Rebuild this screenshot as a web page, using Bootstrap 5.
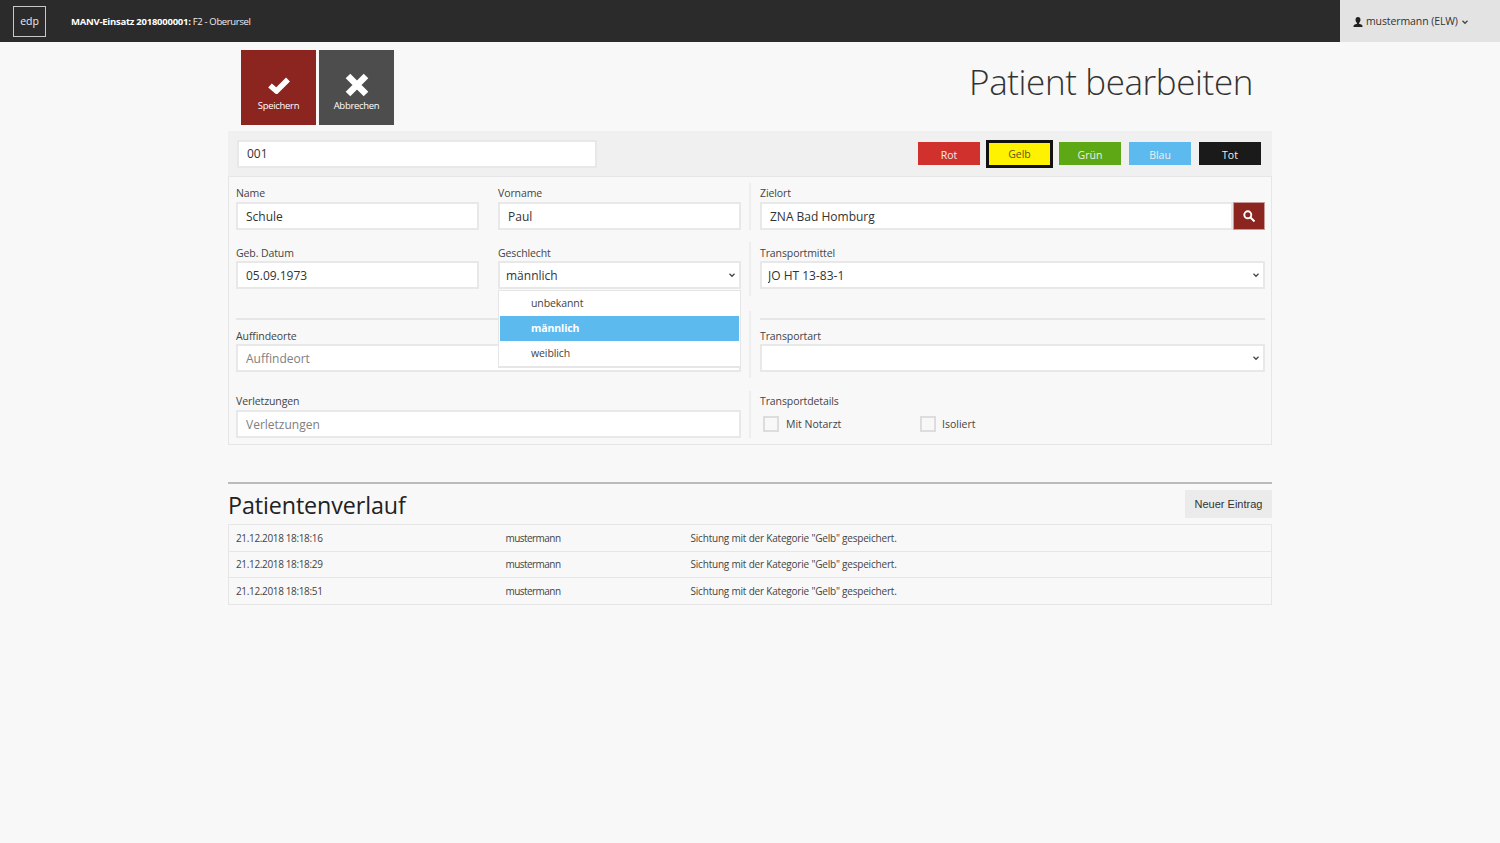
<!DOCTYPE html>
<html lang="de">
<head>
<meta charset="utf-8">
<title>Patient bearbeiten</title>
<link rel="stylesheet" href="https://cdn.jsdelivr.net/npm/bootstrap@5.3.0/dist/css/bootstrap.min.css">
<style>
html,body{height:100%}
body{background:#f8f8f8;font-family:"Open Sans","Noto Sans",sans-serif;color:#333;font-size:11px;--bs-body-bg:#f8f8f8}
.topbar{height:42px;background:#2b2b2b;color:#fff}
.brandbox{width:33px;height:31px;border:1px solid #c8c8c8;margin-left:13px;padding-top:1px;font-size:10.500px;color:#eee}
.topline{margin-left:25px;padding-top:2px;font-size:9.500px;letter-spacing:-.35px;color:#eee}
.topline strong{color:#fff;font-weight:700;letter-spacing:-.25px}
.usermenu{width:160px;background:#e3e3e3;color:#333;font-size:10.500px;padding:1px 0 0 13px;gap:3px;letter-spacing:-.1px}
.page-wrap{width:1044px;position:relative}
.toolbar{height:89px;padding:8px 19px 0 13px;gap:3px}
.actionbtn{width:75px;height:75px;color:#fff;border:0;border-radius:0;font-size:9.500px;letter-spacing:-.3px;padding:27px 0 0;line-height:10px;display:flex;flex-direction:column;align-items:center;justify-content:flex-start}
.actionbtn svg{display:block;margin-bottom:7px;flex:none}
.actionbtn svg.crossicon{margin-top:-4px;margin-bottom:4px}
.btn-save,.btn-save:hover{background:#8c241f;color:#fff}
.btn-cancel,.btn-cancel:hover{background:#4d4d4d;color:#fff}
.pagetitle{font-size:35px;font-weight:300;line-height:1;color:#333;margin:14px 0 0;letter-spacing:-.4px}
.idbar{height:46px;background:#f0f0f0;padding:0 11px 0 9px;border-bottom:1px solid #e6e6e6}
.field{border:2px solid #e8e8e8;border-radius:0;height:28px;padding:0 8px;font-size:12px;color:#333;background-color:#fff;box-shadow:none}
.field::placeholder{color:#808080}
.idfield{width:360px;padding-left:8px}
.tagbtn{width:62px;height:23px;border:0;border-radius:0;color:#eee;font-size:10.500px;padding:3px 0 0;margin-left:8px;line-height:1}
.tag-rot{background:#d0312d}
.tag-gelb{background:#fff200;color:#5a5a12;border:3px solid #111;width:67px;height:28px;margin-left:6px;padding-top:2px}
.tag-gruen{background:#5ea815;margin-left:6px}
.tag-blau{background:#5cbaef}
.tag-tot{background:#1a1a1a}
.formbox{border:1px solid #e6e6e6;border-top:0;padding:6px 0 6px}
.frow{display:flex}
.frow-1{margin-bottom:12px}
.frow-2{margin-bottom:15px}
.frow-3{margin-bottom:13px}
.cell-l{width:522px;border-right:2px solid #eee;padding:4px 8px 0 7px;display:flex;gap:19px;flex:none;position:relative}
.cell-r{flex:1;padding:4px 6px 0 9px}
.fgroup{flex:1;min-width:0}
.flabel{display:block;height:15px;line-height:13px;font-size:10.500px;color:#444;margin:0;letter-spacing:-.1px}
.frow-2 .flabel,.frow-3 .flabel{line-height:15px}
.pb7{padding-bottom:7px}
.pb6{padding-bottom:6px}
.rule{height:2px;background:#e6e6e6;margin:3px 0 9px}
.pick{padding:1px 22px 0 6px;background-size:8px 8px;background-position:right 3px center;--bs-form-select-bg-img:none;background-image:url("data:image/svg+xml,%3csvg xmlns='http://www.w3.org/2000/svg' viewBox='0 0 16 16'%3e%3cpath fill='none' stroke='%23444' stroke-width='2.500' d='M3 5.500l5 5 5-5'/%3e%3c/svg%3e")}
.searchbtn{width:32px;height:28px;padding:0;border:1px solid #c79b99;border-radius:0;background:#8c241f;margin-left:0}
.checkline{height:28px;gap:7px;padding-left:3px}
.checkline .form-check-input{width:16px;height:16px;margin:0;border:2px solid #ddd;border-radius:0;background-color:#f8f8f8;flex:none}
.checkline label{font-size:10.500px;color:#444;padding-top:1px}
.chk-a{width:157px}
.chk-b{gap:6px}
.genderlist{position:absolute;left:269px;top:48px;width:243px;height:78px;z-index:5;background:#fff;border:1px solid #e6e6e6;border-bottom:2px solid #e6e6e6;border-radius:0}
.genderlist .list-group-item{height:25px;border:0;border-radius:0;padding:0 0 0 32px;line-height:25px;background:transparent;font-size:10.500px;color:#444;letter-spacing:-.1px}
.genderlist .list-group-item.active{background:#5cbaef;color:#fff;font-weight:700;margin:0 1px;padding-left:31px}
.histhead{margin-top:37px;border-top:2px solid #bbb;height:42px;padding-top:6px}
.histtitle{font-size:23.300px;line-height:34px;font-weight:400;margin:-2px 0 0;color:#222;letter-spacing:-.1px}
.newbtn{height:28px;width:87px;background:#ebebeb;border:0;border-radius:0;padding:0;font-family:"Liberation Sans",sans-serif;font-size:11px;color:#333}
.histtable{width:100%;table-layout:fixed;border:1px solid #e6e6e6;margin:0;--bs-table-bg:transparent}
.histtable td{height:26.600px;padding:1px 0 0 7px;font-size:10px;color:#444;border-bottom:1px solid #e6e6e6;vertical-align:middle;letter-spacing:-.2px}
.histtable td:first-child{width:270px;letter-spacing:-.35px}
.histtable td:nth-child(2){width:184px;letter-spacing:-.55px}
.histtable td:nth-child(3){padding-left:8px}
</style>
</head>
<body>
<header class="topbar d-flex align-items-center">
  <div class="brandbox d-flex align-items-center justify-content-center">edp</div>
  <div class="topline"><strong>MANV-Einsatz 2018000001:</strong> F2 - Oberursel</div>
  <div class="usermenu ms-auto h-100 d-flex align-items-center">
    <svg width="10" height="10" viewBox="0 0 10 10"><path fill="#222" d="M5 0c1.600 0 2.500 1.200 2.500 2.800S6.600 5.500 6 6v.8c1 .5 3.500.8 3.500 2.200V10H.5V9c0-1.400 2.500-1.700 3.500-2.200V6C3.400 5.500 2.500 4.400 2.500 2.800S3.400 0 5 0z"/></svg>
    <span>mustermann (ELW)</span>
    <svg width="8" height="8" viewBox="0 0 16 16"><path fill="none" stroke="#444" stroke-width="2.500" d="M3 5.500l5 5 5-5"/></svg>
  </div>
</header>
<main class="page-wrap mx-auto">
  <div class="toolbar d-flex align-items-start">
    <button type="button" class="btn actionbtn btn-save">
      <svg width="22" height="17" viewBox="0 0 22 17"><path fill="none" stroke="#fff" stroke-width="5.500" d="M2 8.500l6.500 5.500L20 2.500"/></svg>Speichern</button>
    <button type="button" class="btn actionbtn btn-cancel">
      <svg class="crossicon" width="24" height="24" viewBox="0 0 24 24"><path fill="none" stroke="#fff" stroke-width="6.500" d="M3 3l18 18M21 3L3 21"/></svg>Abbrechen</button>
    <h1 class="pagetitle ms-auto">Patient bearbeiten</h1>
  </div>
  <div class="idbar d-flex align-items-center">
    <input class="form-control field idfield" value="001" aria-label="Nummer">
    <div class="ms-auto d-flex align-items-center">
      <button type="button" class="btn tagbtn tag-rot">Rot</button>
      <button type="button" class="btn tagbtn tag-gelb">Gelb</button>
      <button type="button" class="btn tagbtn tag-gruen">Grün</button>
      <button type="button" class="btn tagbtn tag-blau">Blau</button>
      <button type="button" class="btn tagbtn tag-tot">Tot</button>
    </div>
  </div>
  <form class="formbox">
    <div class="frow frow-1">
      <div class="cell-l">
        <div class="fgroup"><label class="flabel">Name</label><input class="form-control field" value="Schule"></div>
        <div class="fgroup"><label class="flabel">Vorname</label><input class="form-control field" value="Paul"></div>
      </div>
      <div class="cell-r">
        <label class="flabel">Zielort</label>
        <div class="d-flex"><input class="form-control field" value="ZNA Bad Homburg">
          <button type="button" class="btn searchbtn flex-shrink-0 d-flex align-items-center justify-content-center" aria-label="Suchen"><svg width="12" height="12" viewBox="0 0 12 12"><circle cx="4.800" cy="4.800" r="3.500" fill="none" stroke="#fff" stroke-width="1.900"/><path stroke="#fff" stroke-width="2" d="M7.500 7.500l4 4"/></svg></button>
        </div>
      </div>
    </div>
    <div class="frow frow-2">
      <div class="cell-l pb7">
        <div class="fgroup"><label class="flabel">Geb. Datum</label><input class="form-control field" value="05.09.1973"></div>
        <div class="fgroup"><label class="flabel">Geschlecht</label><select class="form-select field pick"><option>männlich</option></select></div>
        <div class="list-group genderlist">
          <div class="list-group-item">unbekannt</div>
          <div class="list-group-item active">männlich</div>
          <div class="list-group-item">weiblich</div>
        </div>
      </div>
      <div class="cell-r pb7">
        <label class="flabel">Transportmittel</label>
        <select class="form-select field pick"><option>JO HT 13-83-1</option></select>
      </div>
    </div>
    <div class="frow frow-3">
      <div class="cell-l pb6 d-block">
        <div class="rule"></div>
        <label class="flabel">Auffindeorte</label><input class="form-control field" placeholder="Auffindeort">
      </div>
      <div class="cell-r pb6">
        <div class="rule"></div>
        <label class="flabel">Transportart</label>
        <select class="form-select field pick"><option></option></select>
      </div>
    </div>
    <div class="frow">
      <div class="cell-l d-block">
        <label class="flabel">Verletzungen</label><input class="form-control field" placeholder="Verletzungen">
      </div>
      <div class="cell-r">
        <label class="flabel">Transportdetails</label>
        <div class="d-flex">
          <div class="checkline chk-a d-flex align-items-center"><input class="form-check-input" type="checkbox" id="c1"><label for="c1">Mit Notarzt</label></div>
          <div class="checkline chk-b d-flex align-items-center"><input class="form-check-input" type="checkbox" id="c2"><label for="c2">Isoliert</label></div>
        </div>
      </div>
    </div>
  </form>
  <div class="histhead d-flex justify-content-between align-items-start">
    <h2 class="histtitle">Patientenverlauf</h2>
    <button type="button" class="btn newbtn">Neuer Eintrag</button>
  </div>
  <table class="table histtable">
    <tbody>
      <tr><td>21.12.2018 18:18:16</td><td>mustermann</td><td>Sichtung mit der Kategorie "Gelb" gespeichert.</td></tr>
      <tr><td>21.12.2018 18:18:29</td><td>mustermann</td><td>Sichtung mit der Kategorie "Gelb" gespeichert.</td></tr>
      <tr><td>21.12.2018 18:18:51</td><td>mustermann</td><td>Sichtung mit der Kategorie "Gelb" gespeichert.</td></tr>
    </tbody>
  </table>
</main>
<script src="https://cdn.jsdelivr.net/npm/bootstrap@5.3.0/dist/js/bootstrap.bundle.min.js"></script>
</body>
</html>
